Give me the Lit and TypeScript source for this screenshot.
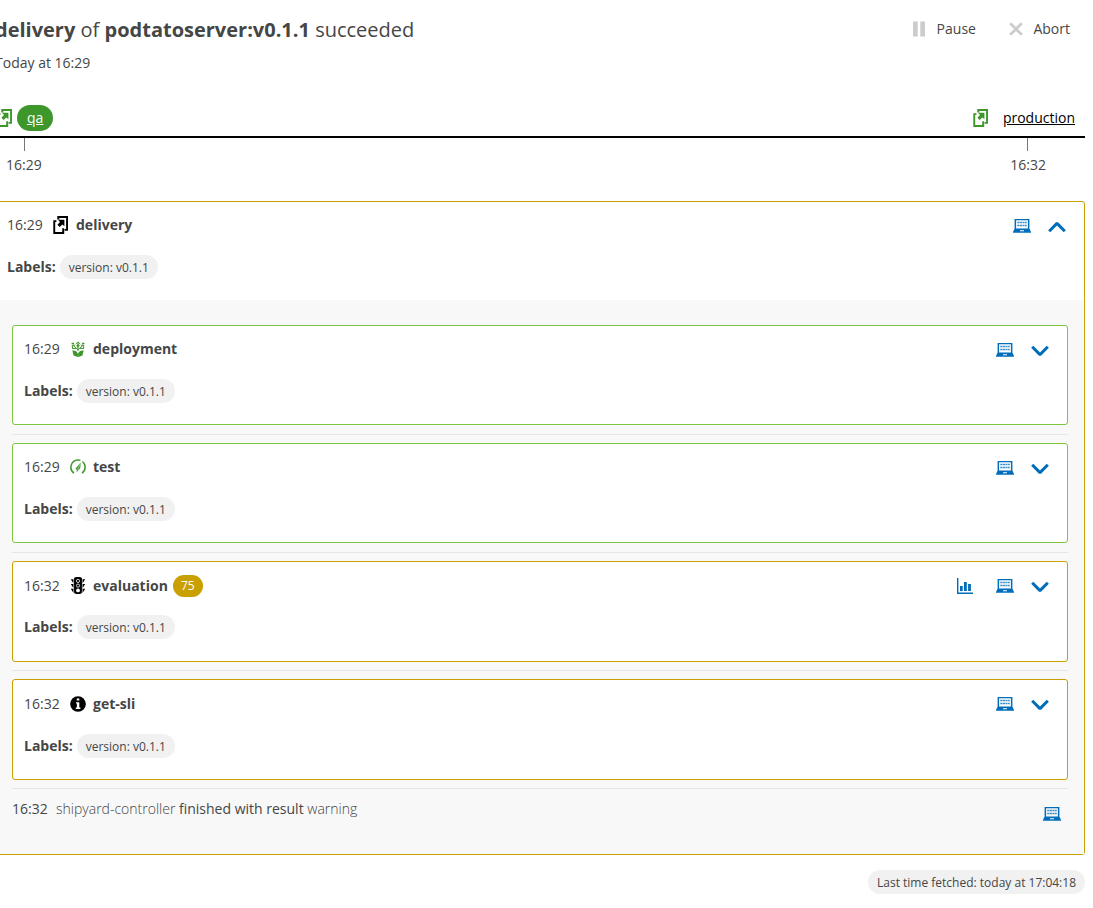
import { LitElement, html, svg, css, nothing } from "lit";
import { customElement, property } from "lit/decorators.js";

const glyphs: Record<string, any> = {
  stage: {
    w: 15, h: 18,
    body: svg`<path fill="currentColor" d="M4.3 0H15V14.8H11.6V12.9H13.1V2H6.3V3.4H4.3Z"/>
      <path fill="currentColor" d="M.3 4.3H3.4V6H2.2V16H9.2V12.2H11.2V18H.3Z"/>
      <path fill="currentColor" d="M5 3.8H11.4V10.2L9.4 8.4L6.6 11L4.4 8.8L7 6.1Z"/>`,
  },
  laptop: {
    w: 18, h: 14,
    body: svg`<path fill="currentColor" fill-rule="evenodd" d="M1.6 0H16.4V10H1.6ZM3.1 1.3V9.4H14.9V1.3Z"/>
      <path stroke="currentColor" stroke-width="1.3" stroke-dasharray="2.2 .4" fill="none" opacity=".75" d="M4.2 3.5H13.8M4.2 6.5H13.8"/>
      <path fill="currentColor" fill-rule="evenodd" d="M1.4 10H16.6L18 13V13.8H0V13ZM7 11.3V12.2H11V11.3Z"/>`,
  },
  up: { w: 18, h: 12, body: svg`<path fill="none" stroke="currentColor" stroke-width="3" stroke-linejoin="bevel" d="M1.2 10.2L9 2.4L16.8 10.2"/>` },
  down: { w: 18, h: 12, body: svg`<path fill="none" stroke="currentColor" stroke-width="3" stroke-linejoin="bevel" d="M1.2 1.8L9 9.6L16.8 1.8"/>` },
  chart: {
    w: 16, h: 16,
    body: svg`<path fill="none" stroke="currentColor" stroke-width="1.4" d="M.7 0V15.2H16"/>
      <path fill="currentColor" d="M3 8H5.7V13H3ZM7 4H9.8V13H7ZM11.1 6H13.9V13H11.1Z"/>`,
  },
  pause: { w: 12, h: 16, body: svg`<path fill="currentColor" d="M0 .5H4.7V15.5H0ZM7.3 .5H12V15.5H7.3Z"/>` },
  abort: { w: 14, h: 14, body: svg`<path fill="none" stroke="currentColor" stroke-width="2.7" d="M1.2 1.2L12.8 12.8M12.8 1.2L1.2 12.8"/>` },
  deploy: {
    w: 16, h: 16,
    body: svg`<path fill="none" stroke="currentColor" stroke-width="1" d="M8 10V1.2M5.8 3L8 .9L10.2 3M8 8.6L3.2 4.6M8 8.6L12.8 4.6M2.6 7.6L2.2 4.3L5 4.2M2.2 7.4H6M13.4 7.6L13.8 4.3L11 4.2M13.8 7.4H10"/>
      <path fill="currentColor" d="M8 3L9.8 4.8L8 6.6L6.2 4.8ZM1.6 1.8H4V3.2H1.6ZM12 1.8H14.4V3.2H12Z"/>
      <path fill="currentColor" d="M2.3 9.6C5 9.2 7.2 10.5 7.7 12.6V16L3.6 14.4ZM13.7 9.6C11 9.2 8.8 10.5 8.3 12.6V16L12.4 14.4Z"/>
      <path fill="currentColor" d="M7.4 12H8.6V16H7.4Z"/>`,
  },
  gauge: {
    w: 16, h: 16,
    body: svg`<path fill="none" stroke="currentColor" stroke-width="1.5" d="M4 14.1A7.2 7.2 0 0 1 8 1A7.2 7.2 0 0 1 10.4 1.4M12.4 2.5A7.2 7.2 0 0 1 12 14.1"/>
      <path fill="currentColor" d="M10.8 3.2L10.2 9.4L7.6 11.4L5.4 9.8ZM6.4 13L7 11L8.4 11.8Z"/>
      <path stroke="#fff" stroke-width=".5" d="M10.4 4.4L7.6 10.6"/>`,
  },
  traffic: {
    w: 16, h: 17,
    body: svg`<path fill="currentColor" d="M.8 2.3H15.2L13 5.8H3ZM.8 7H15.2L13 10.5H3ZM.8 11.7H15.2L13 15.2H3Z"/>
      <rect x="3.7" y="0" width="8.6" height="17" rx="3" fill="currentColor"/>
      <path stroke="#fff" stroke-width=".6" d="M3.6 1.5V15.5M12.4 1.5V15.5"/>
      <circle cx="8" cy="3.9" r="1.6" fill="none" stroke="#fff" stroke-width=".8"/>
      <circle cx="8" cy="8.6" r="1.6" fill="none" stroke="#fff" stroke-width=".8"/>
      <circle cx="8" cy="13.4" r="1.9" fill="#fff"/>`,
  },
  info: {
    w: 16, h: 16,
    body: svg`<circle cx="8" cy="8" r="7.8" fill="currentColor"/>
      <path fill="#fff" d="M6.8 2.4H9.3V4.6H6.8ZM6 6.2H9.3V11.6H10.4V12.9H5.8V11.6H6.9V7.4H6Z"/>`,
  },
};

const icon = (name: string) => {
  const g = glyphs[name];
  return html`<svg width=${g.w} height=${g.h} viewBox="0 0 ${g.w} ${g.h}">${g.body}</svg>`;
};

interface Task { time: string; name: string; icon: string; state: "ok" | "warn"; score?: number }

const shared = css`
  svg { display: block; flex: none; }
  .line { display: flex; align-items: center; height: 20px; }
  .time { width: 46px; }
  .icon { width: 16px; display: flex; margin-right: 7px; }
  .green { color: #3d972b; }
  .black { color: #000; }
  .name { font-weight: 700; }
  .labels { display: flex; align-items: center; height: 24px; margin-top: 19.93px; font-weight: 700; }
  .chip {
    margin-left: 4px; height: 24px; line-height: 25px; box-sizing: border-box; padding: 0 9px;
    border-radius: 12px; background: #f1f1f1; font-size: 12px; font-weight: 400;
  }
  .tools { display: flex; align-items: center; margin-left: auto; color: #006dba; padding-top: 2px; }
  .tools .chevron { margin: 2px 0 0 17px; }
  .tools .chart { margin-right: 23px; }
`;

@customElement("task-card")
class TaskCard extends LitElement {
  @property({ attribute: false }) task!: Task;

  static styles = [shared, css`
    :host { display: block; }
    .card {
      box-sizing: border-box; height: 100.3px; padding: 13.3px 18px 0 11px; background: #fff;
      border: 1px solid #c9a000; border-radius: 3px;
    }
    .card.ok { border-color: #7dc540; }
    .tools { padding-top: 1.2px; }
    .score {
      margin-left: 5px; width: 30px; height: 22px; line-height: 22px; border-radius: 11px;
      background: #c9a000; color: #fff; font-size: 12px; text-align: center;
    }
  `];

  render() {
    const t = this.task;
    return html`<div class="card ${t.state}">
      <div class="line">
        <span class="time">${t.time}</span>
        <span class="icon ${t.state === "ok" ? "green" : "black"}">${icon(t.icon)}</span>
        <span class="name">${t.name}</span>
        ${t.score ? html`<span class="score">${t.score}</span>` : nothing}
        <div class="tools">
          ${t.score ? html`<span class="chart">${icon("chart")}</span>` : nothing}
          ${icon("laptop")}<span class="chevron">${icon("down")}</span>
        </div>
      </div>
      <div class="labels">Labels:<span class="chip">version: v0.1.1</span></div>
    </div>`;
  }
}

@customElement("app-root")
class AppRoot extends LitElement {
  static styles = [shared, css`
    :host {
      display: block; height: 908px; overflow: hidden; box-sizing: border-box; padding-right: 8px;
      background: #fff; color: #454646; font: 14px/20px "Open Sans", sans-serif;
    }
    .head { display: flex; height: 105px; margin-left: -5px; }
    .title { font-size: 20px; line-height: 28px; margin-top: 16px; white-space: nowrap; }
    .date { margin-top: 9px; }
    .actions { margin-left: auto; display: flex; height: 20px; margin-top: 19px; padding-right: 15px; align-items: center; }
    .actions svg { color: #ccc; margin-right: 11.6px; }
    .actions span + svg { margin-left: 33px; margin-right: 10.5px; }
    .stages { display: flex; justify-content: space-between; margin-left: -3px; height: 31px; border-bottom: 2px solid #000; }
    .stage { display: flex; align-items: center; height: 26px; }
    .stage .pill { margin-left: 5px; padding: 0 10px; line-height: 26px; border-radius: 13px; color: #000; text-decoration: underline; }
    .stage .selected { background: #3d972b; color: #fff; }
    .ticks { display: flex; justify-content: space-between; padding: 0 39px 0 6px; height: 63px; }
    .tick { display: flex; flex-direction: column; align-items: center; }
    .tick i { width: 1px; height: 13px; background: #777; margin-bottom: 4px; }
    .tick:first-child i { margin-left: 1px; }
    .tick:last-child i { margin-right: 1px; }
    .sequence {
      margin-left: -6px; box-sizing: border-box; height: 654px; border: 1px solid #c9a000;
      border-radius: 3px; display: flex; flex-direction: column;
    }
    .summary { height: 98px; box-sizing: border-box; padding: 13px 18px 0 12px; }
    .body { flex: 1; background: #f8f8f8; padding: 25px 16px 0 17px; }
    .rule { height: 1px; background: #e5e5e5; margin: 8.7px 0 8.13px; }
    .event { display: flex; height: 36px; margin-top: 10px; }
    .event .when { width: 44px; }
    .event .tools { align-self: flex-start; margin: 6px 7px 0 auto; }
    .light { font-weight: 300; }
    .foot { display: flex; justify-content: flex-end; margin-top: 15px; }
  `];

  tasks: Task[] = [
    { time: "16:29", name: "deployment", icon: "deploy", state: "ok" },
    { time: "16:29", name: "test", icon: "gauge", state: "ok" },
    { time: "16:32", name: "evaluation", icon: "traffic", state: "warn", score: 75 },
    { time: "16:32", name: "get-sli", icon: "info", state: "warn" },
  ];

  render() {
    return html`
      <div class="head">
        <div>
          <div class="title"><b>delivery</b> of <b>podtatoserver:v0.1.1</b> succeeded</div>
          <div class="date">Today at 16:29</div>
        </div>
        <div class="actions">${icon("pause")}<span>Pause</span>${icon("abort")}<span>Abort</span></div>
      </div>
      <div class="stages">
        <div class="stage green">${icon("stage")}<span class="pill selected">qa</span></div>
        <div class="stage green">${icon("stage")}<span class="pill">production</span></div>
      </div>
      <div class="ticks">
        <div class="tick"><i></i>16:29</div>
        <div class="tick"><i></i>16:32</div>
      </div>
      <div class="sequence">
        <div class="summary">
          <div class="line">
            <span class="time">16:29</span><span class="icon black">${icon("stage")}</span>
            <span class="name">delivery</span>
            <div class="tools">${icon("laptop")}<span class="chevron">${icon("up")}</span></div>
          </div>
          <div class="labels">Labels:<span class="chip">version: v0.1.1</span></div>
        </div>
        <div class="body">
          ${this.tasks.map((t) => html`<task-card .task=${t}></task-card><div class="rule"></div>`)}
          <div class="event">
            <span class="when">16:32</span>
            <span><span class="light">shipyard-controller</span> finished with result <span class="light">warning</span></span>
            <div class="tools">${icon("laptop")}</div>
          </div>
        </div>
      </div>
      <div class="foot"><span class="chip">Last time fetched: today at 17:04:18</span></div>
    `;
  }
}
